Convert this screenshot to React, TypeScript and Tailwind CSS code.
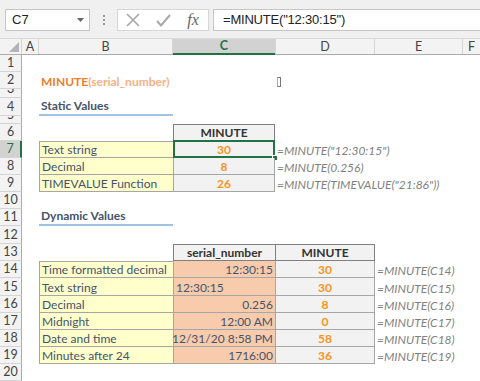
import React from "react";

const font = { fontFamily: "Lato, 'Open Sans', sans-serif" };

type CellProps = { w: string; className?: string; children?: React.ReactNode };
function Cell({ w, className = "", children }: CellProps) {
  return (
    <div className={`${w} shrink-0 h-full flex items-end overflow-visible whitespace-nowrap relative box-border leading-[14px] ${className}`}>
      {children}
    </div>
  );
}

const A = "w-[17px]";
const B = "w-[134px]";
const C = "w-[102px]";
const D = "w-[100px]";
const E = "w-[88px]";
const F = "flex-1";

function Row({ n, h, sel = false, children }: { n: number; h: string; sel?: boolean; children?: React.ReactNode }) {
  return (
    <div className={`flex ${h}`}>
      <div
        className={`w-[22px] shrink-0 h-full flex items-end justify-center overflow-hidden border-b border-[#d4d4d4] box-border text-[12.5px] leading-[14px] ${
          sel ? "bg-[#d2d2d2] text-[#217346] border-r-2 border-r-[#217346]" : "bg-[#f3f3f3] text-[#444] border-r border-r-[#ababab]"
        }`}
      >
        <span className="pb-[1px]">{n}</span>
      </div>
      {children}
    </div>
  );
}

const yellow = "bg-[#ffffcc] border-l border-b border-[#a6a6a6] pl-[2px] text-[#44546a]";
const grayVal = "bg-[#f2f2f2] border-l border-r border-b border-[#a6a6a6] justify-center font-bold text-[#f7941d]";
const peach = "bg-[#f8cbad] border-l border-b border-[#a6a6a6] text-[#44546a]";
const fml = "italic text-[#7f7f7f] pl-[2px]";

export default function App() {
  return (
    <div className="w-[480px] h-[381px] overflow-hidden bg-white text-[12px]" style={font}>
      {/* formula bar */}
      <div className="h-[39px] bg-[#f0f0f0] flex items-start pt-[9px] pl-[5px] border-b border-[#dadada] box-border">
        <div className="w-[85px] h-[22px] bg-white border border-[#c6c6c6] flex items-center pl-[6px] pr-[4px] justify-between box-border">
          <span className="text-[13px] text-[#222]" style={{ fontFamily: "'Liberation Sans', sans-serif" }}>C7</span>
          <svg width="8" height="5" viewBox="0 0 8 5"><path d="M0 0h7L3.5 4z" fill="#666" /></svg>
        </div>
        <div className="w-[27px] h-[22px] flex flex-col items-center justify-center gap-[2px]">
          <span className="w-[2px] h-[2px] bg-[#999]" />
          <span className="w-[2px] h-[2px] bg-[#999]" />
          <span className="w-[2px] h-[2px] bg-[#999]" />
        </div>
        <div className="w-[92px] h-[22px] bg-white border border-[#d6d6d6] flex items-center box-border">
          <div className="w-[30px] flex justify-center">
            <svg width="14" height="14" viewBox="0 0 14 14"><path d="M1 1L13 13M13 1L1 13" stroke="#a8a8a8" strokeWidth="1.6" /></svg>
          </div>
          <div className="w-[30px] flex justify-center">
            <svg width="15" height="13" viewBox="0 0 15 13"><path d="M1 7L5 11.5L14 1" stroke="#a8a8a8" strokeWidth="2" fill="none" /></svg>
          </div>
          <div className="w-[30px] flex justify-center">
            <span className="italic text-[16px] text-[#666] leading-none" style={{ fontFamily: "'Liberation Serif', serif" }}>fx</span>
          </div>
        </div>
        <div className="flex-1 ml-[4px] h-[22px] bg-white border border-[#c6c6c6] border-r-0 flex items-center pl-[9px] box-border">
          <span className="text-[13px] text-[#222]" style={{ fontFamily: "'Liberation Sans', sans-serif", letterSpacing: "-0.2px" }}>=MINUTE("12:30:15")</span>
        </div>
      </div>

      {/* column headers */}
      <div className="flex h-[16px] bg-[#f3f3f3] text-[12.5px] text-[#444] border-b border-[#ababab] box-border leading-[14px]">
        <div className="w-[22px] shrink-0 h-full relative border-r border-[#d4d4d4] box-border">
          <svg className="absolute right-[2px] bottom-[2px]" width="10" height="10" viewBox="0 0 10 10"><path d="M10 0V10H0z" fill="#b4b4b4" /></svg>
        </div>
        <div className={`${A} shrink-0 flex items-center justify-center border-r border-[#d4d4d4] box-border`}>A</div>
        <div className={`${B} shrink-0 flex items-center justify-center border-r border-[#d4d4d4] box-border`}>B</div>
        <div className={`${C} shrink-0 flex items-center justify-center bg-[#d2d2d2] text-[#217346] font-bold border-b-2 border-[#217346] box-border -mb-px`}>C</div>
        <div className={`${D} shrink-0 flex items-center justify-center border-r border-l border-[#d4d4d4] box-border`}>D</div>
        <div className={`${E} shrink-0 flex items-center justify-center border-r border-[#d4d4d4] box-border`}>E</div>
        <div className={`${F} flex items-center justify-center`}>F</div>
      </div>

      <Row n={1} h="h-[17px]" />
      <Row n={2} h="h-[17px]">
        <Cell w={A} />
        <Cell w={B} className="pl-[2px] font-bold">
          <span className="text-[#ed7d31]">MINUTE</span>
          <span className="text-[#f4b183]">(serial_number)</span>
        </Cell>
        <Cell w={C} className="justify-end">
          <span className="inline-block w-[4px] h-[10px] border border-[#777] border-l-[#e0a060] mr-[-6px] mb-[2px]" />
        </Cell>
      </Row>
      <Row n={3} h="h-[9px]" />
      <Row n={4} h="h-[18px]">
        <Cell w={A} />
        <Cell w={B} className="pl-[2px] pb-[1px] font-bold text-[#44546a] border-b-2 border-[#9dc3e6]">Static Values</Cell>
      </Row>
      <Row n={5} h="h-[8px]" />
      <Row n={6} h="h-[17px]">
        <Cell w={A} />
        <Cell w={B} />
        <Cell w={C} className="bg-[#f2f2f2] border border-[#7f7f7f] justify-center font-bold text-[#333]">MINUTE</Cell>
      </Row>
      <Row n={7} h="h-[17px]" sel>
        <Cell w={A} />
        <Cell w={B} className={`${yellow} border-t`}>Text string</Cell>
        <Cell w={C} className={grayVal}>
          30
          <div className="absolute -left-[1px] -top-[1px] -right-[1px] -bottom-[1px] border-2 border-[#217346]" />
          <div className="absolute -right-[4px] -bottom-[4px] w-[6px] h-[6px] bg-[#217346] border border-white" />
        </Cell>
        <Cell w={D} className={fml}>=MINUTE("12:30:15")</Cell>
      </Row>
      <Row n={8} h="h-[17px]">
        <Cell w={A} />
        <Cell w={B} className={yellow}>Decimal</Cell>
        <Cell w={C} className={grayVal}>8</Cell>
        <Cell w={D} className={fml}>=MINUTE(0.256)</Cell>
      </Row>
      <Row n={9} h="h-[17px]">
        <Cell w={A} />
        <Cell w={B} className={yellow}>TIMEVALUE Function</Cell>
        <Cell w={C} className={grayVal}>26</Cell>
        <Cell w={D} className={fml}>=MINUTE(TIMEVALUE("21:86"))</Cell>
      </Row>
      <Row n={10} h="h-[17px]" />
      <Row n={11} h="h-[17px]">
        <Cell w={A} />
        <Cell w={B} className="pl-[2px] pb-[1px] font-bold text-[#44546a] border-b-2 border-[#9dc3e6]">Dynamic Values</Cell>
      </Row>
      <Row n={12} h="h-[18px]" />
      <Row n={13} h="h-[17px]">
        <Cell w={A} />
        <Cell w={B} />
        <Cell w={C} className="bg-[#f2f2f2] border-l border-t border-b border-[#7f7f7f] justify-center font-bold text-[#333]">serial_number</Cell>
        <Cell w={D} className="bg-[#f2f2f2] border border-[#7f7f7f] justify-center font-bold text-[#333]">MINUTE</Cell>
      </Row>
      {[
        [14, "h-[17px]", "Time formatted decimal", "12:30:15", "30", false],
        [15, "h-[18px]", "Text string", "12:30:15", "30", true],
        [16, "h-[17px]", "Decimal", "0.256", "8", false],
        [17, "h-[17px]", "Midnight", "12:00 AM", "0", false],
        [18, "h-[17px]", "Date and time", "12/31/20 8:58 PM", "58", false],
        [19, "h-[17px]", "Minutes after 24", "1716:00", "36", false],
      ].map(([n, h, label, sv, m, left]) => (
        <Row key={n as number} n={n as number} h={h as string}>
          <Cell w={A} />
          <Cell w={B} className={`${yellow} ${n === 14 ? "border-t" : ""}`}>{label as string}</Cell>
          <Cell w={C} className={`${peach} ${left ? "justify-start pl-[2px]" : "justify-end pr-[2px]"}`}>{sv as string}</Cell>
          <Cell w={D} className={grayVal}>{m as string}</Cell>
          <Cell w={E} className={fml}>=MINUTE(C{n as number})</Cell>
        </Row>
      ))}
      <Row n={20} h="h-[17px]" />
    </div>
  );
}
